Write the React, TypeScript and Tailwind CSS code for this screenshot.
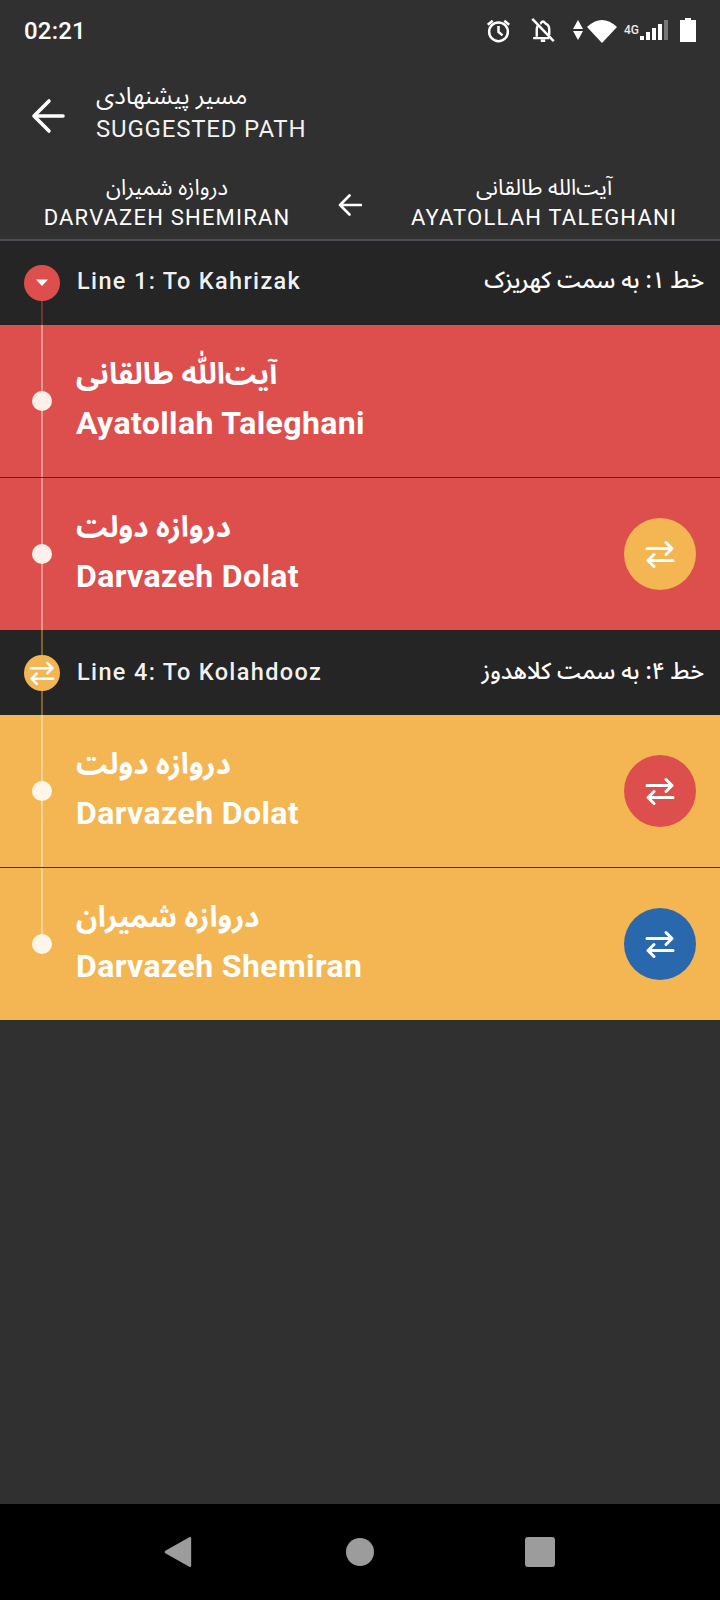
import React from "react";

const fa = { fontFamily: '"Noto Sans Arabic","Noto Naskh Arabic","DejaVu Sans",sans-serif' };

function Swap({ size = 32, w = 3 }: { size?: number; w?: number }) {
  return (
    <svg width={size} height={size} viewBox="0 0 32 32" fill="none" stroke="white" strokeWidth={w} strokeLinecap="round" strokeLinejoin="round">
      <path d="M3 10.5H28M22 4.5L28 10.5L22 16.5" />
      <path d="M29 22.5H4M10 16.5L4 22.5L10 28.5" />
    </svg>
  );
}

function SwapBtn({ color }: { color: string }) {
  return (
    <div className={`mr-6 flex h-[72px] w-[72px] items-center justify-center rounded-full ${color}`}>
      <Swap />
    </div>
  );
}

function LineHeader({ en, faText, icon, color, rule, h, circleTop, fromCircle }: { en: string; faText: string; icon: React.ReactNode; color: string; rule: string; h: string; circleTop: string; fromCircle?: boolean }) {
  return (
    <div className={`relative flex items-start justify-between bg-[#252525] pl-[77px] pr-4 ${h}`}>
      <div className={`absolute bottom-0 left-[41px] w-0.5 ${rule} ${fromCircle ? "top-10" : "top-0"}`} />
      <div className={`absolute left-6 flex h-9 w-9 items-center justify-center rounded-full ${color} ${circleTop}`}>{icon}</div>
      <div className="text-[23.5px] font-medium leading-[40px] tracking-[1.35px] text-white/95">{en}</div>
      <div dir="rtl" style={fa} className="text-[23px] font-medium leading-[40px] text-white">{faText}</div>
    </div>
  );
}

function Stop({ faText, en, color, dot, btn, border, last }: { faText: string; en: string; color: string; dot: string; btn?: string; border?: boolean; last?: boolean }) {
  return (
    <div className={`relative flex items-center justify-between ${color} ${border ? "h-[153px] border-b border-[#3a3236]" : "h-[152px]"}`}>
      <div className={`absolute left-[41px] top-0 w-0.5 bg-white/40 ${last ? "h-1/2" : "h-full"}`} />
      <div className={`absolute left-8 top-[66px] h-5 w-5 rounded-full ${dot}`} />
      <div className="pb-[5px] pl-[76px] text-white">
        <div dir="rtl" style={fa} className="w-fit text-[29.5px] font-bold leading-[48px]">{faText}</div>
        <div className="text-[32px] font-bold leading-[48px] tracking-[0.4px]">{en}</div>
      </div>
      {btn && <SwapBtn color={btn} />}
    </div>
  );
}

export default function App() {
  return (
    <div className="flex h-[1600px] w-[720px] flex-col overflow-hidden bg-[#303030] text-white" style={{ fontFamily: "Roboto, sans-serif" }}>
      <div className="flex h-[60px] items-center justify-between pl-6 pr-6">
        <span className="mt-0.5 text-[24px] font-medium tracking-[0.2px]">02:21</span>
        <div className="flex items-center">
          <svg width="25" height="25" viewBox="0 0 28 28" fill="none" stroke="white" strokeWidth="2.8" className="mr-5">
            <circle cx="14" cy="15.5" r="10.5" />
            <path d="M14 9V15.5L18.5 19.5" />
            <path d="M2 7.5L7.5 3M26 7.5L20.5 3" />
          </svg>
          <svg width="24" height="25" viewBox="0 0 26 28" fill="none" stroke="white" strokeWidth="2.7" className="mr-[18px]">
            <path d="M6 21V13C6 11 6.4 9.8 7.4 8.5M10 6.5C11 6 11 4 13 4C15 4 15 6 16.5 6.5C19 7.5 20 10 20 13V19M2 22.5H20M10.5 25.5H15.5" />
            <path d="M1 1L25 26" strokeWidth="2.8" />
          </svg>
          <svg width="10" height="20" viewBox="0 0 10 20" fill="white" className="mr-1">
            <path d="M5 0L10 9H0Z" />
            <path d="M5 20L0 11H10Z" />
          </svg>
          <svg width="30" height="25" viewBox="0 0 30 25" fill="white" className="mr-[7px]">
            <path d="M15 25L0 9Q15 -5 30 9Z" />
          </svg>
          <span className="mr-0.5 w-[14px] whitespace-nowrap text-[12px] font-medium leading-none text-white/90">4G</span>
          <svg width="28" height="20" viewBox="0 0 28 20" fill="white" className="mr-3">
            <rect x="0" y="16" width="4" height="4" />
            <rect x="6" y="12" width="4" height="8" />
            <rect x="12" y="8" width="4" height="12" />
            <rect x="18" y="4" width="4" height="16" />
            <rect x="24" y="0" width="4" height="20" fill="#777" />
          </svg>
          <svg width="16" height="24" viewBox="0 0 16 24" fill="white">
            <path d="M5 0H11V2H16V24H0V2H5Z" />
          </svg>
        </div>
      </div>

      <div className="flex h-[105px] items-center pl-[31px]">
        <svg width="34" height="36" viewBox="0 0 34 36" fill="none" stroke="white" strokeWidth="3.6" strokeLinecap="round" strokeLinejoin="round" className="mt-1.5">
          <path d="M3 18H32M18 3L3 18L18 33" />
        </svg>
        <div className="ml-[31px]">
          <div dir="rtl" style={fa} className="w-fit text-[24px] leading-[32px]">مسیر پیشنهادی</div>
          <div className="text-[24px] leading-[32px] tracking-[0.8px] text-white/95">SUGGESTED PATH</div>
        </div>
      </div>

      <div className="flex h-[76px] items-start justify-between border-b-2 border-[#4d4a54] pl-[45px] pr-[43px] pt-2">
        <div className="flex w-[244px] flex-col items-center">
          <div dir="rtl" style={fa} className="text-[22px] leading-[30px]">دروازه شمیران</div>
          <div className="whitespace-nowrap text-[22px] leading-[30px] tracking-[1.2px]">DARVAZEH SHEMIRAN</div>
        </div>
        <svg width="24" height="24" viewBox="0 0 24 24" fill="none" stroke="white" strokeWidth="2.6" strokeLinecap="round" strokeLinejoin="round" className="mt-[20px]">
          <path d="M2 12H23M11.5 2.5L2 12L11.5 21.5" />
        </svg>
        <div className="flex w-[266px] flex-col items-center">
          <div dir="rtl" style={fa} className="text-[22px] leading-[30px]">آیت‌الله طالقانی</div>
          <div className="whitespace-nowrap text-[22px] leading-[30px] tracking-[1.2px]">AYATOLLAH TALEGHANI</div>
        </div>
      </div>

      <LineHeader
        en="Line 1: To Kahrizak"
        faText="خط ۱: به سمت کهریزک"
        color="bg-[#dd4f4c]"
        rule="bg-[#6b3533]"
        h="h-[84px] pt-5"
        circleTop="top-6"
        fromCircle
        icon={<svg width="12" height="8" viewBox="0 0 12 8" fill="white"><path d="M0 0.5H12L6 7Z" /></svg>}
      />
      <Stop faText="آیت‌ﷲ طالقانی" en="Ayatollah Taleghani" color="bg-[#dd4f4c]" dot="bg-[#fdf0ea]" border />
      <Stop faText="دروازه دولت" en="Darvazeh Dolat" color="bg-[#dd4f4c]" dot="bg-[#fdf0ea]" btn="bg-[#f4b653]" />
      <LineHeader
        en="Line 4: To Kolahdooz"
        faText="خط ۴: به سمت کلاهدوز"
        color="bg-[#f4b653]"
        rule="bg-[#7a6136]"
        h="h-[85px] pt-[22px]"
        circleTop="top-[25px]"
        icon={<Swap size={28} w={2.8} />}
      />
      <Stop faText="دروازه دولت" en="Darvazeh Dolat" color="bg-[#f4b653]" dot="bg-[#fff6ea]" btn="bg-[#dd4f4c]" border />
      <Stop faText="دروازه شمیران" en="Darvazeh Shemiran" color="bg-[#f4b653]" dot="bg-[#fff6ea]" btn="bg-[#2a68ad]" last />

      <div className="flex-1" />

      <div className="flex h-[96px] items-center bg-black">
        <div className="flex w-full items-center justify-between pl-[163px] pr-[165px]">
          <svg width="30" height="32" viewBox="0 0 30 34" fill="#9c9c9c"><path d="M27 1.2Q29 0.5 29 2.5V31.5Q29 33.5 27 32.8L1.5 18.2Q0 17 1.5 15.8Z" /></svg>
          <div className="ml-0.5 h-7 w-7 rounded-full bg-[#9c9c9c]" />
          <div className="h-[30px] w-[30px] rounded-[3px] bg-[#9c9c9c]" />
        </div>
      </div>
    </div>
  );
}
